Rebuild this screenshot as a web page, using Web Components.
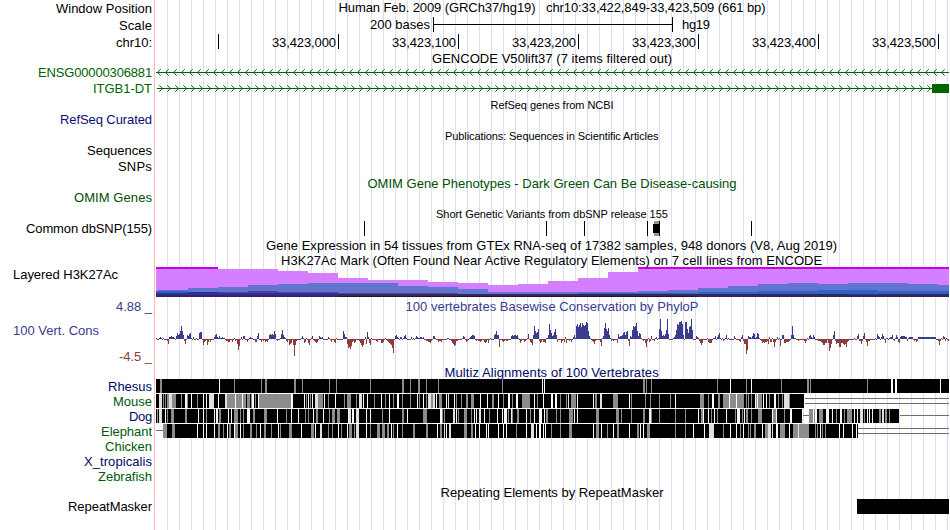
<!DOCTYPE html>
<html lang="en">
<head>
<meta charset="utf-8">
<title>Genome Browser</title>
<style>
    body {
        margin: 0;
        background: #fff;
    }
</style>
</head>
<body>
<genome-browser>
    <track-row height="17">
        <fit-text slot="label" width="96">Window Position</fit-text>
        <fit-text width="427" style="top:-1px">Human Feb. 2009 (GRCh37/hg19)&nbsp;&nbsp; chr10:33,422,849-33,423,509 (661 bp)</fit-text>
    </track-row>
    <track-row height="17">
        <fit-text slot="label" width="33">Scale</fit-text>
        <scale-bar></scale-bar>
    </track-row>
    <track-row height="16">
        <fit-text slot="label" width="36">chr10:</fit-text>
        <base-ruler></base-ruler>
    </track-row>
    <track-row height="15">
        <fit-text width="240" style="top:1px">GENCODE V50lift37 (7 items filtered out)</fit-text>
    </track-row>
    <track-row height="16">
        <fit-text slot="label" width="114" color="#006400" style="top:-1px">ENSG00000306881</fit-text>
        <gene-line top="65" y="72" from="157" dir="left"></gene-line>
    </track-row>
    <track-row height="16">
        <fit-text slot="label" width="59" color="#006400" style="top:-1px">ITGB1-DT</fit-text>
        <gene-line top="81" y="88" from="162" dir="right" exon="932"></gene-line>
    </track-row>
    <track-row height="15">
        <fit-text width="123" small style="top:1px">RefSeq genes from NCBI</fit-text>
    </track-row>
    <track-row height="16">
        <fit-text slot="label" width="92" color="#0c0c78" style="top:-1px">RefSeq Curated</fit-text>
    </track-row>
    <track-row height="15">
        <fit-text width="214" small style="top:1px">Publications: Sequences in Scientific Articles</fit-text>
    </track-row>
    <track-row height="15">
        <fit-text slot="label" width="65">Sequences</fit-text>
    </track-row>
    <track-row height="17">
        <fit-text slot="label" width="34">SNPs</fit-text>
    </track-row>
    <track-row height="15">
        <fit-text width="369" color="#005000" style="top:1px">OMIM Gene Phenotypes - Dark Green Can Be Disease-causing</fit-text>
    </track-row>
    <track-row height="16">
        <fit-text slot="label" width="78" color="#005000" style="top:-1px">OMIM Genes</fit-text>
    </track-row>
    <track-row height="15">
        <fit-text width="232" small style="top:1px">Short Genetic Variants from dbSNP release 155</fit-text>
    </track-row>
    <track-row height="15">
        <fit-text slot="label" width="126">Common dbSNP(155)</fit-text>
        <snp-ticks></snp-ticks>
    </track-row>
    <track-row height="17">
        <fit-text width="572" style="top:1px">Gene Expression in 54 tissues from GTEx RNA-seq of 17382 samples, 948 donors (V8, Aug 2019)</fit-text>
    </track-row>
    <track-row height="14">
        <fit-text width="542">H3K27Ac Mark (Often Found Near Active Regulatory Elements) on 7 cell lines from ENCODE</fit-text>
    </track-row>
    <track-row height="30" align="start">
        <fit-text slot="label" width="105">Layered H3K27Ac</fit-text>
        <histone-layers></histone-layers>
    </track-row>
    <conservation-row></conservation-row>
    <track-row height="14">
        <fit-text width="215" color="#000a64">Multiz Alignments of 100 Vertebrates</fit-text>
    </track-row>
    <track-row height="15">
        <fit-text slot="label" width="44" color="#000a64">Rhesus</fit-text>
        <align-bar data-row="rhesus"></align-bar>
    </track-row>
    <track-row height="15">
        <fit-text slot="label" width="39" color="#005a0a">Mouse</fit-text>
        <align-bar data-row="mouse"></align-bar>
    </track-row>
    <track-row height="15">
        <fit-text slot="label" width="23" color="#000a64">Dog</fit-text>
        <align-bar data-row="dog"></align-bar>
    </track-row>
    <track-row height="15">
        <fit-text slot="label" width="51" color="#005a0a">Elephant</fit-text>
        <align-bar data-row="elephant"></align-bar>
    </track-row>
    <track-row height="15">
        <fit-text slot="label" width="47" color="#005a0a">Chicken</fit-text>
    </track-row>
    <track-row height="15">
        <fit-text slot="label" width="68" color="#000a64">X_tropicalis</fit-text>
    </track-row>
    <track-row height="15">
        <fit-text slot="label" width="54" color="#005a0a">Zebrafish</fit-text>
    </track-row>
    <track-row height="15">
        <fit-text width="223" style="top:1px">Repeating Elements by RepeatMasker</fit-text>
    </track-row>
    <track-row height="15">
        <fit-text slot="label" width="84">RepeatMasker</fit-text>
        <repeat-block></repeat-block>
    </track-row>
</genome-browser>

<script>
const rect = (x, y, w, h, fill) => `<rect x="${x}" y="${y}" width="${w}" height="${h}" fill="${fill}"/>`;

// Every track is drawn in window pixels: x starts at the end of the label column.
const canvas = (top, height, body) => `
    <style>
        :host { display: block; width: 794px; height: ${height}px; }
        svg { display: block; shape-rendering: crispEdges; }
        text { font: 13px "Liberation Sans", Arial, sans-serif; }
    </style>
    <svg width="794" height="${height}" viewBox="155 ${top} 794 ${height}">${body}</svg>`;

class GenomeBrowser extends HTMLElement {
    constructor() {
        super();
        this.attachShadow({ mode: 'open' }).innerHTML = `
            <style>
                :host {
                    display: flex;
                    flex-direction: column;
                    box-sizing: border-box;
                    width: 949px;
                    height: 530px;
                    overflow: hidden;
                    font: 13px "Liberation Sans", Arial, sans-serif;
                    color: #000;
                    background:
                        linear-gradient(#ffb4b4, #ffb4b4) 154px 0 / 1px 100% no-repeat,
                        repeating-linear-gradient(90deg, #dcdcf5 0 1px, transparent 1px 12px) 167px 0 / 782px 100% no-repeat;
                }
            </style>
            <slot></slot>`;
    }
}

class TrackRow extends HTMLElement {
    constructor() {
        super();
        this.attachShadow({ mode: 'open' });
    }

    connectedCallback() {
        const start = this.getAttribute('align') === 'start';
        this.shadowRoot.innerHTML = `
            <style>
                :host {
                    display: grid;
                    grid-template-columns: 155px 794px;
                    height: ${this.getAttribute('height')}px;
                    flex: none;
                }
                .label {
                    display: flex;
                    align-items: ${start ? 'flex-start' : 'center'};
                    justify-content: ${start ? 'flex-start' : 'flex-end'};
                    padding: 0 3px 0 13px;
                }
                .track {
                    display: flex;
                    align-items: center;
                    justify-content: center;
                }
            </style>
            <div class="label"><slot name="label"></slot></div>
            <div class="track"><slot></slot></div>`;
    }
}

// A line of text spaced out to a given width.
class FitText extends HTMLElement {
    constructor() {
        super();
        this.attachShadow({ mode: 'open' });
    }

    connectedCallback() {
        const size = this.hasAttribute('small') ? 11 : 13;
        const width = Number(this.getAttribute('width'));
        const text = this.textContent;
        const ctx = document.createElement('canvas').getContext('2d');
        ctx.font = `${size}px "Liberation Sans"`;
        const spacing = (width - ctx.measureText(text).width) / text.length;
        this.shadowRoot.innerHTML = `
            <style>
                :host {
                    display: block;
                    position: relative;
                    width: ${width}px;
                    font-size: ${size}px;
                    line-height: 15px;
                    letter-spacing: ${spacing.toFixed(3)}px;
                    white-space: nowrap;
                    color: ${this.getAttribute('color') || '#000'};
                }
            </style>
            <slot></slot>`;
    }
}

class ScaleBar extends HTMLElement {
    constructor() {
        super();
        this.attachShadow({ mode: 'open' }).innerHTML = canvas(17, 17, `
            <text x="370" y="29" textLength="60">200 bases</text>
            ${rect(433, 17, 1, 15, '#000')}${rect(433, 24, 240, 1, '#000')}${rect(672, 17, 1, 15, '#000')}
            <text x="682" y="29" textLength="28">hg19</text>`);
    }
}

class BaseRuler extends HTMLElement {
    constructor() {
        super();
        let body = rect(218, 34, 1, 15, '#000');
        for (let i = 0; i < 6; i++) {
            const x = 338 + i * 120;
            body += `<text x="${x - 66}" y="47" textLength="64">33,423,${i}00</text>` + rect(x, 34, 1, 15, '#000');
        }
        this.attachShadow({ mode: 'open' }).innerHTML = canvas(34, 16, body);
    }
}

class GeneLine extends HTMLElement {
    constructor() {
        super();
        this.attachShadow({ mode: 'open' });
    }

    connectedCallback() {
        const top = Number(this.getAttribute('top'));
        const y = Number(this.getAttribute('y'));
        const exon = Number(this.getAttribute('exon'));
        const step = this.getAttribute('dir') === 'left' ? 1 : -1;
        let body = rect(step === 1 ? 156 : 157, y, 793, 1, '#006400');
        for (let x = Number(this.getAttribute('from')); x < (exon || 949); x += 8) {
            for (let i = 1; i < 4; i++) {
                const tone = i === 3 ? '#5a9b5a' : '#0f6e0f';
                body += rect(x + i * step, y - i, 1, 1, tone) + rect(x + i * step, y + i, 1, 1, tone);
            }
        }
        if (exon) {
            body += rect(exon, y - 4, 17, 9, '#006400');
        }
        this.shadowRoot.innerHTML = canvas(top, 16, body);
    }
}

class SnpTicks extends HTMLElement {
    constructor() {
        super();
        const ticks = [364, 546, 584, 647, 751].map(x => rect(x, 221, 1, 15, '#000')).join('');
        this.attachShadow({ mode: 'open' }).innerHTML = canvas(221, 15, ticks
            + rect(654, 221, 5, 15, '#969696') + rect(653, 224, 6, 9, '#000') + rect(659, 221, 1, 15, '#000'));
    }
}

// [x, top] steps, each layer filled down to its bottom edge
const LAYERS = [
    { fill: '#d37fff', bottom: 297, steps: [[156, 269], [278, 271], [308, 273], [338, 278], [368, 280], [428, 282], [458, 283], [488, 285], [518, 284], [548, 281], [578, 278], [608, 272], [638, 269]] },
    { fill: '#6275cd', bottom: 297, steps: [[156, 291], [158, 290], [188, 288], [218, 287], [248, 285], [278, 284], [308, 283], [398, 286], [428, 287], [458, 289], [488, 292], [638, 291], [668, 290], [698, 288], [728, 286], [758, 284], [788, 283], [818, 284], [848, 283], [908, 284], [938, 285]] },
    { fill: '#2f62c8', bottom: 297, steps: [[156, 291], [188, 292], [218, 297], [578, 293], [698, 292], [758, 291], [818, 290], [878, 291]] },
    { fill: '#5a3c9e', bottom: 297, steps: [[156, 297], [218, 292], [248, 291], [278, 292], [338, 293], [458, 294], [488, 297]] },
    { fill: '#302ba8', bottom: 297, steps: [[156, 293], [188, 292], [218, 293], [338, 297], [848, 294], [878, 297]] },
    { fill: '#32275a', bottom: 297, steps: [[156, 295], [338, 294], [848, 295], [878, 294]] },
    { fill: '#2e1030', bottom: 297, steps: [[156, 297], [338, 296], [698, 297]] }
];

class HistoneLayers extends HTMLElement {
    constructor() {
        super();
        let body = '';
        for (const { fill, bottom, steps } of LAYERS) {
            steps.forEach(([x, top], i) => {
                const end = i + 1 < steps.length ? steps[i + 1][0] : 949;
                body += rect(x, top, end - x, bottom - top, fill);
            });
        }
        body += rect(156, 267, 62, 2, '#c800e6') + rect(638, 267, 311, 2, '#c800e6');
        this.attachShadow({ mode: 'open' }).innerHTML = canvas(267, 30, body);
    }
}

// Runs of scores, "x:v,v,v"; the bases between them are near zero.
const PHYLOP = `156:1,-1,-1,1,2,1,-1,1 167:-2,-5,2,2,3,2,2,1,-1,3,6,4,5,8,13,8,4,-2,-5,-1,4,3,5,6,1,-1,2,-1,-1,1,-1,-1,6,7,7
202:-1,-6,-3,-2,-1,-6,-3,-1,-3,-1,-1 214:2,4,5,2,1,3,1,1,2,1 226:-2,-2,-3,-3,-1,-1,-3,-1,1,-2,-1,-5,-11,-7,-1,2,-1,3,3,-1,-1,-3,-1,1,2,1
254:-1,-3,-3,3,6,-1,-1,-3,-1,-2,-1,-3,-2,-3,-1,4,5,4,5,4,8,5,-1,-2,-1,-1 281:5,9,4,2,1,-2,-3,-1,-6,-5,-4,-1,-6,-17,-6,-2 302:3,1,-4,-3,1,-1,-4,-6,-1,1,3,-1,-2,-3,-4,-3,-1,3,2,1,2
328:2,1,-1,-3,-1,-1,-3,-4 343:8,5,2,2,-5,-9,-8,-10,-7,-3,-2,-4,-3,-1,-1,-1,-2,-4,-6,-8,-6,-1,2,-5,7,2,-4,-6,1 376:-2,-3,-1,-1,-1,-4,-4,-3,-1,1,-1,-2,-3,-4,-5,-6,-9,-14,-1,3,4,2,1,-1,2,2,-1,1,3,4 411:2 415:1,3,2,1,1,2,2,1,2
426:-2,-2,-3,-3,-4,-2,-1,3,3,1,-1,-1,-3,-2,-2,-3 447:1,1 451:-2,-4,-5,-7,-6,-2,-2 463:3,2,-1,-3,-2 470:2,3,4,4,3,-1,-2,-1,-2,-2,-3,-2,-1,-1,-3,-4,-3,-1,-4 494:4,5,8,4,4,-8,-1,-1,-2,-3,-2,-1,-2,-2 511:3,4,3,4,4,3,4,1,-1,-4,-2,-1,-1,-3,-2,-1,1,5,-1,-3,-4,-6,4,13,8,6,7,10,-2,-4,-3,-1,-3,-3,-4 547:1,4,15,9,6,3,4,7,10,4,-3,-1,-1,-1,-4,-2,-1,-3,2,-4,-1,-1,-2,-1,-3,-1,2,4,1,13,15,12,14,16,12,16,14,13,14,17,16,8,3,1
592:-2,-3,-5,-2,-1,-1,-1,-1,-3,-7,1,3,11,16,10,8,11,4,1,-2,-1,-2,-1,-1 616:-1,-4,5,2,3,3,4,6,7,4,7,8,-2,-7,3,2,9,13,12,13,16,8,3,6,5,1,-1,-2,-1,-4,-8,-2,1,-3,-2,3,-1,-1,-2,1,2 659:10,20,8,3,4,3,5,9,20,5,-1,-1,-1,-1,1,2,4,9,15,14,17,17,18,15,4,-1,17,17,10,6,12,13,20,9,-1
696:3,2,1,-2,-4,-6,-4,-1,-1 708:-3,-4,-4,-4,-1,1,1,3,-1,2,4,6,1,-1,1,-2 725:1,4 734:3,1,-1,-1,-1,-2,-3,2,4,-2,-5,-5,-15,-11,3,2,2,1,3,6,5,1,2,6,5,1,-1,-2,-4,-3,-4,-3,-3,-2,-5,2,-3,-3,1,-3,-8,-3,-1,2,-1,1,-7,-1,4,4,-4,-4,-3,-3,-3,-2,-1,4,13,4,1,1,-1
798:-2,-1 804:-2,-4,-2,1 809:3,4,2,1,4,2 818:-2,-2,-2,-3,-4,-6,-6,-4,-4,-1,-4,-12,-9,-5,-1,4,8,-2,-5,-4,-4,-8,-8,-4,-4,-5,-6,-5,-8,-3,-2 857:3,5,-2,-2,-5,-2,3,6,-1,-3,-7,-2,-2 877:5,3,2,-1,2,5,3,-1,-4,1,1 889:1,2,2,4,-1,-2,1,4,2,-3,-4,2,3,3,3,3,2,2,-2,1,2,2,2,2,-1,-2,-1,-3,-2,2,2,2,2,2,2,2,2,2,2,2,2,2,2,2,2,2,2
937:-1,-2,-6,-2,1,-1,3,2,-2,1,-1,-2`;

class ConservationRow extends HTMLElement {
    constructor() {
        super();
        const scores = {};
        for (const run of PHYLOP.split(/\s+/)) {
            const [x, values] = run.split(':');
            values.split(',').forEach((v, i) => { scores[Number(x) + i] = Number(v); });
        }
        let bars = '';
        for (let x = 156; x < 949; x++) {
            const v = scores[x] || (x % 7 === 0 ? 1 : -1);
            bars += v > 0 ? rect(x, 339 - v, 1, v, '#3c3c8c') : rect(x, 339, 1, -v, '#8c3c3c');
        }
        this.attachShadow({ mode: 'open' }).innerHTML = `
            <style>
                :host {
                    display: grid;
                    grid-template-columns: 155px 794px;
                    height: 68px;
                    flex: none;
                }
                .labels {
                    display: flex;
                    flex-direction: column;
                    justify-content: space-between;
                    align-items: flex-end;
                    padding: 2px 3px 1px 13px;
                }
                .name {
                    align-self: flex-start;
                }
                .track {
                    display: flex;
                    flex-direction: column;
                    align-items: center;
                    padding-top: 2px;
                }
                svg {
                    display: block;
                    shape-rendering: crispEdges;
                }
            </style>
            <div class="labels">
                <fit-text width="36" color="#3c3c8c">4.88 _</fit-text>
                <fit-text class="name" width="86" color="#3c3c8c" style="top:-1px">100 Vert. Cons</fit-text>
                <fit-text width="33" color="#8c3c3c">-4.5 _</fit-text>
            </div>
            <div class="track">
                <fit-text width="293" color="#3c3c8c">100 vertebrates Basewise Conservation by PhyloP</fit-text>
                <svg width="794" height="51" viewBox="155 314 794 51">${bars}</svg>
            </div>`;
    }
}

// Aligned spans are black. Marks are tone + x (+ ":" width): g grey, l light, w white.
const ALIGNMENTS = {
    rhesus: {
        top: 379,
        spans: [[156, 949]],
        marks: 'g160:2 w219 g234 g261 g265:2 g294:2 g302 g329 g336 g370 g402:2 g410 g418:2 g426 g438 g502 w542 w544 g643:2 g646 g651 g717 w730 g746 w751 g781 g807:2 g810 g867 w891:2 w895:2 w940'
    },
    mouse: {
        top: 394,
        spans: [[156, 804]],
        double: [805, 949],
        marks: 'l159:3 g163 g165 g167:2 l169:3 g172:4 g181 w185:2 g187 w191 g197 w203 w206 l209:5 w218 l225:2 g227:8 w235 g236:6 w242 g243:3 g247:3 g251 w252:2 g255 w258 g259:32 w291:2 w304 g306 w308 g310 w312 l315:3 g318:5 w324 g328 w335 g344 g347:4 g356 l359:3 w363 w367 g374 w381 g385 w389 g393 w397:2 g402 g410 w417 g419 w423 g426 l428:3 g431:2 l433:2 w436 g439:3 w446 l448 w454 g456 g461 g466:2 g471:3 w480 w487 g492:2 w498 g503 w508:2 g512 w516:2 g522:8 w534 g537 w543 w551:2 w555:2 g560 g566 l568 g571:5 w577 w593 g595:2 l600:2 g613:5 w629 g631 g645 g650 g659 g670 w675 g700:4 g708 w712:2 g718:2 g723:6 w729 g730:6 w736 g737:7 g746 g748 g751 w755 g756 w757 g758:4 w763 w766 g769 w774:2 g778 g782 l784:5 g789'
    },
    dog: {
        top: 409,
        spans: [[156, 802], [809, 899]],
        single: [[803, 809], [900, 949]],
        marks: 'g157 l159:3 w165 g167 g171:3 g185:2 w198 w203 g206 w214 w216:2 g219:2 w228 w231 g234:4 g240 g243 w247:3 g253:2 g264:3 w277 g286 w291 w298 g305 g308 w313 g316:2 w323 g329 g332:3 g337:3 w348 l349:2 w352:2 l356:3 w366 w370 g382 w389 g402:2 w407 g423:4 w440:2 g442 g444 l453:2 w456 g458 g464:3 g471 w474 w476 l479:2 w484 g489 w497 w502 w504:3 g508 w511 g512 g517:2 w526 g530 w534 w539:3 w544 g546:2 g556 g560 g569:4 w574 w577 g596:3 g616:3 g621 g631 g643:2 w649:2 g651 g659 g675 g685 w698 g701:2 w703 w708 g711 w714 g717 w726 g735 w737:3 g742 w744 g746:2 g751 g758:4 w772 g773:3 w776 g784 w790:2 g809:4 w813 g814 w815:2 g819:4 w826:3 w832 g836 w840:2 g844 g847:5 w854 w857 l860:3 g864 w867 w869 w872 g879:2 l882:2 g885:2 g889'
    },
    elephant: {
        top: 424,
        spans: [[163, 858]],
        single: [[156, 163]],
        double: [858, 949],
        marks: 'g163:4 g172:3 w197 w203 w206 w214 g218:2 g223 w227 g229:2 w234 g235:3 w240 g243 g250:2 g256 w260 g264:2 g271 w278 g280 g289:3 w301 g311:3 w315 l320:2 g328 g332 w338 g341 w347 g349:3 g354 l356:3 w366 g370 g377:3 g382:3 g387:2 w391 g393 w397 g402 g413:2 g426:2 w437 g440:2 l444 w446 l449:2 g464:3 g471:2 w475 w479 w486 w488 w498 w503 w506 g516 w526 l531:3 w536 w539:2 w543 w545 g551 g560 g569:3 w593 g596:3 w601 g607 w613 g617:2 w629 g637:2 w640 w643 g647:3 g675 g685 w693 w704 l709:5 g723 w730 w736 g740 w743 g748 g750 g754:2 w762 g765:3 l768:3 l772 w776:2 g780:5 w789 g793:5 l798 g799:10 g815 g817 w820 g822 g825 w839 w843 w852 w856'
    }
};

const TONES = { g: '#8c8c8c', l: '#dfdfdf', w: '#fafafa' };

class AlignBar extends HTMLElement {
    constructor() {
        super();
        this.attachShadow({ mode: 'open' });
    }

    connectedCallback() {
        const { top, spans, single = [], double, marks } = ALIGNMENTS[this.dataset.row];
        let body = spans.map(([a, b]) => rect(a, top, b - a, 14, '#000')).join('');
        body += single.map(([a, b]) => rect(a, top + 6, b - a, 1, '#6e6e6e')).join('');
        if (double) {
            body += rect(double[0], top + 4, double[1] - double[0], 1, '#6e6e6e');
            body += rect(double[0], top + 9, double[1] - double[0], 1, '#6e6e6e');
        }
        for (const mark of marks.split(' ')) {
            const [x, w = 1] = mark.slice(1).split(':');
            body += rect(x, top, w, 14, TONES[mark[0]]);
        }
        this.shadowRoot.innerHTML = canvas(top, 15, body);
    }
}

class RepeatBlock extends HTMLElement {
    constructor() {
        super();
        this.attachShadow({ mode: 'open' }).innerHTML = canvas(499, 15, rect(857, 499, 92, 15, '#000'));
    }
}

customElements.define('fit-text', FitText);
customElements.define('track-row', TrackRow);
customElements.define('scale-bar', ScaleBar);
customElements.define('base-ruler', BaseRuler);
customElements.define('gene-line', GeneLine);
customElements.define('snp-ticks', SnpTicks);
customElements.define('histone-layers', HistoneLayers);
customElements.define('conservation-row', ConservationRow);
customElements.define('align-bar', AlignBar);
customElements.define('repeat-block', RepeatBlock);
customElements.define('genome-browser', GenomeBrowser);
</script>
</body>
</html>
